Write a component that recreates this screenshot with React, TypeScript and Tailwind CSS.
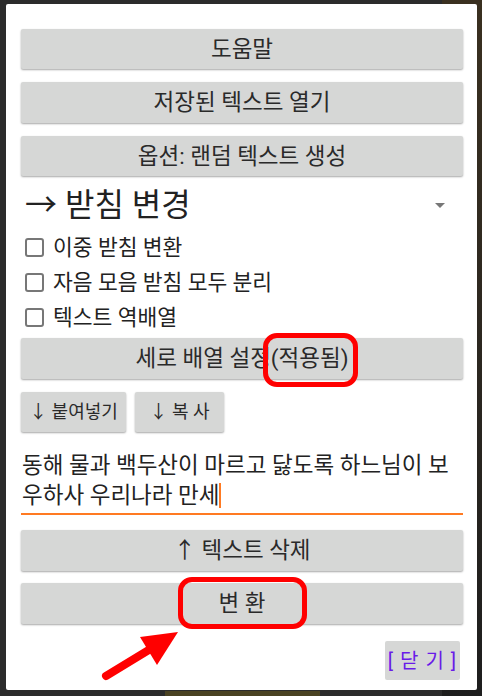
import React from "react";

const font = { fontFamily: "Roboto, 'Noto Sans CJK KR', 'Noto Sans', sans-serif" };

function Btn({ children, className = "" }: { children: React.ReactNode; className?: string }) {
  return (
    <div
      className={
        "flex items-center justify-center bg-[#d6d7d6] rounded-[2px] shadow-[0_1px_2px_rgba(0,0,0,0.35)] text-[#2a2a2a] leading-none " +
        className
      }
    >
      {children}
    </div>
  );
}

function Check({ label }: { label: string }) {
  return (
    <div className="flex items-center h-[35px] pl-[4px]">
      <div className="w-[19px] h-[19px] border-[2px] border-[#777] rounded-[3px] shrink-0" />
      <span className="ml-[9px] text-[21.5px] text-[#222] leading-none">{label}</span>
    </div>
  );
}

export default function App() {
  return (
    <div
      className="relative w-[482px] h-[696px] overflow-hidden bg-[#2b2b2b] pt-[4px] pl-[6px]"
      style={font}
    >
      <div className="absolute right-0 top-0 w-[40px] h-[696px] bg-gradient-to-b from-[#3a3020] to-[#1e1e1e]" />
      <div className="absolute left-[165px] top-[691px] w-[155px] h-[5px] bg-[#4a4222]" />
      <div className="relative w-[471px] h-[686px] bg-white rounded-[2px] pl-[15px] pr-[14px] pt-[25px] flex flex-col">
        <Btn className="h-[40px] text-[22.5px]">도움말</Btn>
        <Btn className="h-[41px] mt-[13px] text-[22.5px]">저장된 텍스트 열기</Btn>
        <Btn className="h-[40px] mt-[13px] text-[22.5px]">옵션: 랜덤 텍스트 생성</Btn>
        <div className="h-[50px] mt-[4px] flex items-center justify-between pl-[4px] pr-[18px]">
          <span className="text-[32px] text-[#222] leading-none">→ 받침 변경</span>
          <div className="w-0 h-0 border-l-[5px] border-r-[5px] border-t-[5px] border-l-transparent border-r-transparent border-t-[#777]" />
        </div>
        <Check label="이중 받침 변환" />
        <Check label="자음 모음 받침 모두 분리" />
        <Check label="텍스트 역배열" />
        <Btn className="h-[41px] mt-[3px] text-[22.5px]">세로 배열 설정(적용됨)</Btn>
        <div className="flex gap-[9px] mt-[13px]">
          <Btn className="h-[40px] w-[105px] text-[18px]">↓ 붙여넣기</Btn>
          <Btn className="h-[40px] w-[89px] text-[18px]">↓ 복 사</Btn>
        </div>
        <div className="mt-[18px] border-b-[2px] border-[#ff7a22] pb-[3px] text-[22.5px] leading-[30px] text-[#222] pl-[1px] whitespace-nowrap">
          동해 물과 백두산이 마르고 닳도록 하느님이 보<br />
          우하사 우리나라 만세<span className="inline-block w-[2px] h-[25px] bg-[#ff7a22] align-[-5px]" />
        </div>
        <Btn className="h-[41px] mt-[15px] text-[22.5px]">↑ 텍스트 삭제</Btn>
        <Btn className="h-[41px] mt-[12px] text-[22.5px]">변 환</Btn>
        <div className="flex justify-end mt-[17px] pr-[3px]">
          <div className="w-[75px] h-[39px] bg-[#d6d7d6] rounded-[2px] flex items-center justify-center text-[20px] leading-none text-[#6a1be8] tracking-[1px]">
            [ 닫 기 ]
          </div>
        </div>
      </div>
      <div className="absolute left-[263px] top-[333px] w-[95px] h-[54px] border-[5px] border-[#ff0000] rounded-[14px]" />
      <div className="absolute left-[178px] top-[577px] w-[129px] h-[52px] border-[5px] border-[#ff0000] rounded-[14px]" />
      <svg className="absolute left-0 top-0" width="482" height="696">
        <line x1="106" y1="676" x2="152" y2="648" stroke="#ff0000" strokeWidth="8" strokeLinecap="round" />
        <polygon points="178,632 140,637 157,665" fill="#ff0000" />
      </svg>
    </div>
  );
}
